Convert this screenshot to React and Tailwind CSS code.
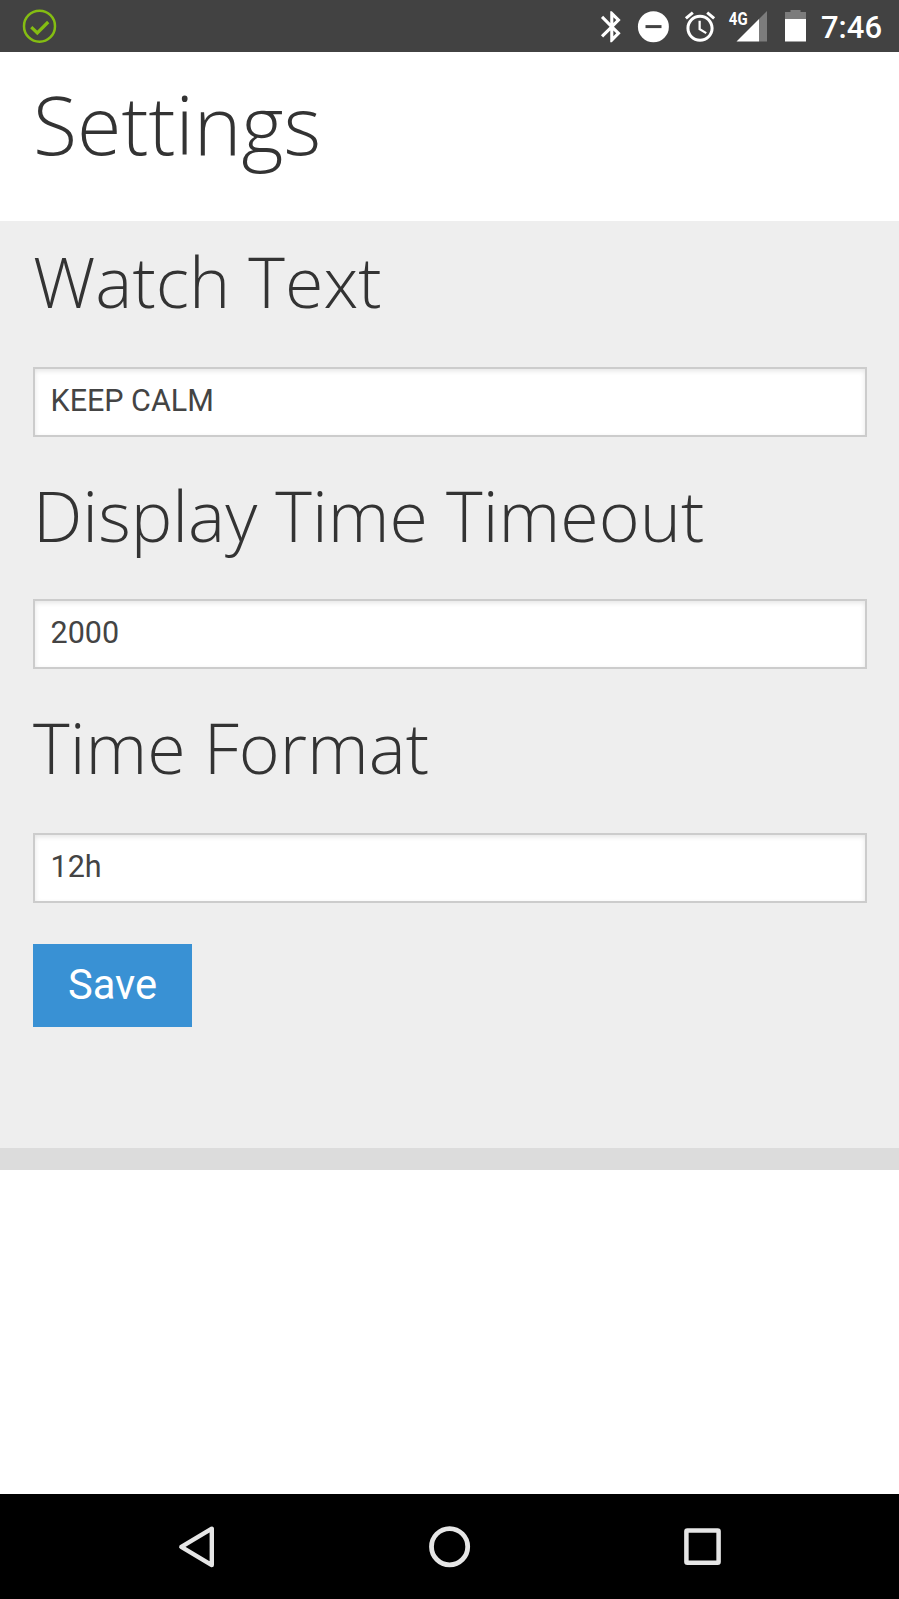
const fields = [
  { label: 'Watch Text', value: 'KEEP CALM', heading: 'pt-[25.5px] pb-[50.5px]' },
  { label: 'Display Time Timeout', value: '2000', heading: 'pt-[43px] pb-[49px]' },
  { label: 'Time Format', value: '12h', heading: 'pt-[43px] pb-[51px]' },
];

function StatusBar() {
  return (
    <div className="flex h-[52px] shrink-0 items-center bg-[#424242] pl-[22px] text-white">
      <svg className="h-[36px] w-[36px]" viewBox="22 8 36 36" fill="none" stroke="#84bd12">
        <circle cx="39.5" cy="26.2" r="15.5" strokeWidth="2.5" />
        <path d="M31.3 27.2 37.3 33 48.2 22" strokeWidth="3.2" />
      </svg>
      <svg className="ml-auto h-[36px] w-[22px]" viewBox="600 8 22 36" fill="#fff">
        <path
          transform="translate(593.2 8.1) scale(1.55)"
          d="M17.71 7.71 12 2h-1v7.59L6.41 5 5 6.41 10.59 12 5 17.59 6.41 19 11 14.41V22h1l5.71-5.71-4.3-4.29 4.3-4.29zM13 5.83l1.88 1.88L13 9.59V5.83zm1.88 10.46L13 18.17v-3.76l1.88 1.88z"
        />
      </svg>
      <svg className="ml-[15px] h-[36px] w-[34px]" viewBox="637 8 34 36">
        <circle cx="653.4" cy="26.7" r="15.5" fill="#fff" />
        <path d="M645.5 26.6h16" stroke="#424242" strokeWidth="3" />
      </svg>
      <svg className="ml-[13px] h-[36px] w-[32px]" viewBox="684 8 32 36" fill="#fff">
        <path
          transform="translate(681.9 8.6) scale(1.51)"
          d="M22 5.72l-4.6-3.86-1.29 1.53 4.6 3.86L22 5.72zM7.88 3.39L6.6 1.86 2 5.71l1.29 1.53 4.59-3.85zM12.5 8H11v6l4.75 2.85.75-1.23-4-2.37V8zM12 4c-4.97 0-9 4.03-9 9s4.02 9 9 9c4.97 0 9-4.03 9-9s-4.03-9-9-9zm0 16c-3.87 0-7-3.13-7-7s3.13-7 7-7 7 3.13 7 7-3.13 7-7 7z"
        />
      </svg>
      <svg className="ml-[12px] h-[36px] w-[40px]" viewBox="728 8 40 36">
        <path d="M767 11v30.5h-8V19z" fill="#7c7c7c" />
        <path d="M759 19v22.5h-22.5z" fill="#fff" />
        <text
          x="728.8"
          y="24.6"
          fill="#fff"
          fontFamily="Roboto, sans-serif"
          fontWeight="700"
          fontSize="18"
          textLength="18.8"
          lengthAdjust="spacingAndGlyphs"
        >
          4G
        </text>
      </svg>
      <svg className="ml-[17px] h-[36px] w-[21px]" viewBox="785 8 21 36">
        <path d="M785 19v-7h5.5v-2h10v2h5.5v7z" fill="#7c7c7c" />
        <path d="M785 19h21v22.5h-21z" fill="#fff" />
      </svg>
      <div className="ml-[15px] w-[78px] pt-[3px] text-[31px] leading-[36px] font-medium">7:46</div>
    </div>
  );
}

function NavBar() {
  return (
    <div className="flex h-[105px] shrink-0 items-center justify-between bg-black pr-[176px] pl-[177px]">
      <svg className="h-[44px] w-[40px]" viewBox="177 1524.5 40 44" fill="none" stroke="#e6e6e6">
        <path d="M211.8 1528.2v36.4L181.3 1546.4z" strokeWidth="4.4" strokeLinejoin="round" />
      </svg>
      <svg className="h-[44px] w-[44px]" viewBox="427 1524.5 44 44" fill="none" stroke="#e6e6e6">
        <circle cx="449.6" cy="1546.2" r="18.1" strokeWidth="4.8" />
      </svg>
      <svg className="h-[44px] w-[42px]" viewBox="681 1524.5 42 44" fill="none" stroke="#e6e6e6">
        <rect x="686.4" y="1530" width="32.2" height="32.2" rx="1" strokeWidth="4.5" />
      </svg>
    </div>
  );
}

export default function App() {
  return (
    <div className="flex h-[1599px] w-[899px] flex-col overflow-hidden bg-white font-['Roboto',sans-serif]">
      <StatusBar />
      <header className="h-[168.5px] shrink-0 px-[33px] pt-[32px]">
        <h1 className="font-['Open_Sans',sans-serif] text-[80.8px] leading-[81px] font-light text-[#333]">Settings</h1>
      </header>
      <main className="h-[949px] shrink-0 border-b-[22px] border-[#dcdcdc] bg-[#eee] px-[33px]">
        {fields.map((field) => (
          <label key={field.label} className="block">
            <h2
              className={`font-['Open_Sans',sans-serif] text-[69.9px] leading-[70px] font-light whitespace-nowrap text-[#333] ${field.heading}`}
            >
              {field.label}
            </h2>
            <input
              className="block h-[70px] w-[834px] border-2 border-[#ccc] bg-white px-[15.5px] pb-[2px] text-[30.5px] text-[#444] shadow-[inset_0_2px_5px_rgba(0,0,0,0.1)] outline-none"
              defaultValue={field.value}
            />
          </label>
        ))}
        <button className="mt-[41px] block h-[83.5px] w-[159px] bg-[#3991d4] text-[41.7px] text-white">Save</button>
      </main>
      <div className="flex-1" />
      <NavBar />
    </div>
  );
}
